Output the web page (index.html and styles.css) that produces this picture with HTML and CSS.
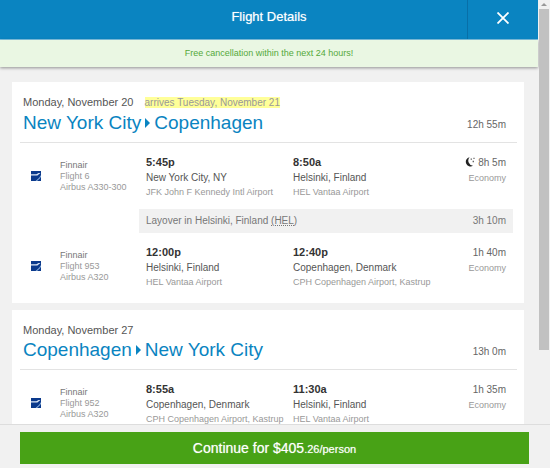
FILE: index.html
```html
<!DOCTYPE html>
<html lang="en">
<head>
  <meta charset="UTF-8" />
  <meta name="viewport" content="width=device-width, initial-scale=1.0"/>
  <title>Flight Details</title>
  <link rel="stylesheet" href="styles.css">
</head>
<body>

  <svg class="sprite" aria-hidden="true">
    <symbol id="airline" viewBox="0 0 10 10">
      <rect width="10" height="10" fill="#0b3a8c"/>
      <path d="M0 3.2H5.4L7.6 2H9.4L6.4 4.4H0Z" fill="#dfe9f6"/>
      <path d="M10 4L8.2 6.8L4.6 10H6L8.8 7.4L10 5.8Z" fill="#8fb2dd"/>
    </symbol>
  </svg>

  <div class="modal">
    <div class="viewport">
      <main class="content">
        <header class="header">
          <h1 class="title">Flight Details</h1>
          <button class="close" aria-label="Close">
            <svg width="12" height="12" viewBox="0 0 12 12"><path d="M0.5 0.5L11.5 11.5M11.5 0.5L0.5 11.5" stroke="#fff" stroke-width="1.8" fill="none"/></svg>
          </button>
        </header>
        <p class="notice">Free cancellation within the next 24 hours!</p>

        <div class="cards">
          <section class="card">
            <div class="trip">
              <div>
                <p class="date">Monday, November 20 <mark class="arrives">arrives Tuesday, November 21</mark></p>
                <h2 class="route">New York City<span class="arrow"></span>Copenhagen</h2>
              </div>
              <span class="duration">12h 55m</span>
            </div>

            <div class="segment">
              <svg class="logo"><use href="#airline"/></svg>
              <div class="airline"><span class="name">Finnair</span><span>Flight 6</span><span>Airbus A330-300</span></div>
              <div class="stop"><strong>5:45p</strong><span>New York City, NY</span><small>JFK John F Kennedy Intl Airport</small></div>
              <div class="stop"><strong>8:50a</strong><span>Helsinki, Finland</span><small>HEL Vantaa Airport</small></div>
              <div class="length">
                <span class="duration">
                  <svg class="moon" viewBox="0 0 10 10"><path d="M4.6 0.2A4.7 4.7 0 1 0 8 8.8A5.2 5.2 0 0 1 4.6 0.2Z" fill="#222"/><path d="M5.6 1.4h1.4v1.4h-1.4zM8.4 0.8h1.2v1.2h-1.2zM7.6 3.8h1.4v1.4h-1.4z" fill="#666"/></svg>
                  8h 5m
                </span>
                <small>Economy</small>
              </div>
            </div>

            <div class="layover">
              <span>Layover in Helsinki, Finland <abbr title="Helsinki Vantaa">(HEL)</abbr></span>
              <span>3h 10m</span>
            </div>

            <div class="segment">
              <svg class="logo"><use href="#airline"/></svg>
              <div class="airline"><span class="name">Finnair</span><span>Flight 953</span><span>Airbus A320</span></div>
              <div class="stop"><strong>12:00p</strong><span>Helsinki, Finland</span><small>HEL Vantaa Airport</small></div>
              <div class="stop"><strong>12:40p</strong><span>Copenhagen, Denmark</span><small>CPH Copenhagen Airport, Kastrup</small></div>
              <div class="length"><span class="duration">1h 40m</span><small>Economy</small></div>
            </div>
          </section>

          <section class="card">
            <div class="trip">
              <div>
                <p class="date">Monday, November 27</p>
                <h2 class="route">Copenhagen<span class="arrow"></span>New York City</h2>
              </div>
              <span class="duration">13h 0m</span>
            </div>

            <div class="segment">
              <svg class="logo"><use href="#airline"/></svg>
              <div class="airline"><span class="name">Finnair</span><span>Flight 952</span><span>Airbus A320</span></div>
              <div class="stop"><strong>8:55a</strong><span>Copenhagen, Denmark</span><small>CPH Copenhagen Airport, Kastrup</small></div>
              <div class="stop"><strong>11:30a</strong><span>Helsinki, Finland</span><small>HEL Vantaa Airport</small></div>
              <div class="length"><span class="duration">1h 35m</span><small>Economy</small></div>
            </div>
          </section>
        </div>
      </main>
      <div class="scrollbar" aria-hidden="true">
        <span class="scroll-up"></span>
        <span class="thumb"></span>
      </div>
    </div>

    <footer class="footer">
      <button class="continue">Continue for $405<span class="cents">.26/person</span></button>
    </footer>
  </div>

</body>
</html>
```

FILE: styles.css
```css
* {
  box-sizing: border-box;
}

body {
  margin: 0;
  font-family: "Liberation Sans", Arial, sans-serif;
  font-size: 10px;
  color: #555;
  background: #f1f1f1;
}

h1, h2, p {
  margin: 0;
  font-weight: normal;
}

button {
  font-family: inherit;
  border: none;
  padding: 0;
  color: #fff;
  cursor: pointer;
}

.sprite {
  position: absolute;
  width: 0;
  height: 0;
}

.modal {
  display: flex;
  flex-direction: column;
  height: 100vh;
}

.viewport {
  display: flex;
  flex: 1;
  min-height: 0;
  overflow: hidden;
}

.content {
  flex: 1;
  min-width: 0;
}

/* header */
.header {
  display: grid;
  grid-template-columns: 71px 1fr 71px;
  height: 40px;
  background: #0a84c1;
  border-bottom: 1px solid #7fc4e4;
}

.title {
  grid-column: 2;
  font-size: 13px;
  line-height: 34px;
  text-align: center;
  color: #fff;
  text-shadow: 0 0 1px rgba(255,255,255,0.6);
}

.close {
  display: flex;
  justify-content: center;
  align-items: center;
  padding-bottom: 4px;
  background: #0a84c1;
  border-left: 1px solid #086fa8;
}

.notice {
  font-size: 9px;
  line-height: 27px;
  text-align: center;
  color: #55a93a;
  background: #eaf7e3;
  box-shadow: 0 1px 3px rgba(0,0,0,0.4);
}

/* trips */
.cards {
  display: flex;
  flex-direction: column;
  gap: 7px;
  padding: 15px 14px 15px 12px;
}

.card {
  padding: 0 7px 6px 8px;
  background: #fff;
}

.trip {
  display: flex;
  justify-content: space-between;
  align-items: flex-end;
  padding: 12px 11px 8px 3px;
  border-bottom: 1px solid #e3e3e3;
}

.date {
  font-size: 11px;
  line-height: 16px;
}

.arrives {
  margin-left: 8px;
  font-size: 10px;
  color: #999;
  background: #ffff99;
}

.route {
  display: flex;
  align-items: center;
  gap: 4px;
  font-size: 19px;
  line-height: 23px;
  color: #0a84c1;
}

.arrow {
  border-left: 5px solid #0a84c1;
  border-top: 5px solid transparent;
  border-bottom: 5px solid transparent;
}

.duration {
  font-size: 10px;
  line-height: 18px;
  color: #666;
}

.segment {
  display: grid;
  grid-template-columns: 29px 86px 147fr 150fr 63fr;
  padding: 11px 11px 9px;
  white-space: nowrap;
}

.logo {
  width: 10px;
  height: 10px;
  align-self: center;
}

.airline {
  display: flex;
  flex-direction: column;
  align-self: center;
  font-size: 9px;
  line-height: 11px;
  color: #999;
}

.name {
  color: #777;
}

.stop {
  display: flex;
  flex-direction: column;
  line-height: 16px;
}

.stop strong {
  font-size: 11px;
  color: #333;
}

small {
  font-size: 9px;
  line-height: 12px;
  color: #999;
}

.length {
  display: flex;
  flex-direction: column;
  text-align: right;
}

.moon {
  width: 10px;
  height: 10px;
  vertical-align: -1px;
}

.layover {
  display: flex;
  justify-content: space-between;
  margin: 2px 4px 0 119px;
  padding: 0 7px;
  line-height: 24px;
  color: #777;
  background: #f1f1f1;
}

abbr {
  text-decoration: underline dotted;
}

/* scrollbar */
.scrollbar {
  display: flex;
  flex-direction: column;
  width: 12px;
  padding: 3px 1px 0;
}

.scroll-up {
  align-self: center;
  margin-bottom: 3px;
  border-bottom: 3px solid #999;
  border-left: 3px solid transparent;
  border-right: 3px solid transparent;
}

.thumb {
  height: 81%;
  background: #c1c1c1;
}

/* footer */
.footer {
  padding: 7px 21px 4px 20px;
  background: #f1f1f1;
  border-top: 1px solid #ddd;
}

.continue {
  display: block;
  width: 100%;
  height: 32px;
  font-size: 14px;
  background: #48a216;
  text-shadow: 0 0 1px rgba(255,255,255,0.6);
}

.cents {
  font-size: 11px;
}
```
